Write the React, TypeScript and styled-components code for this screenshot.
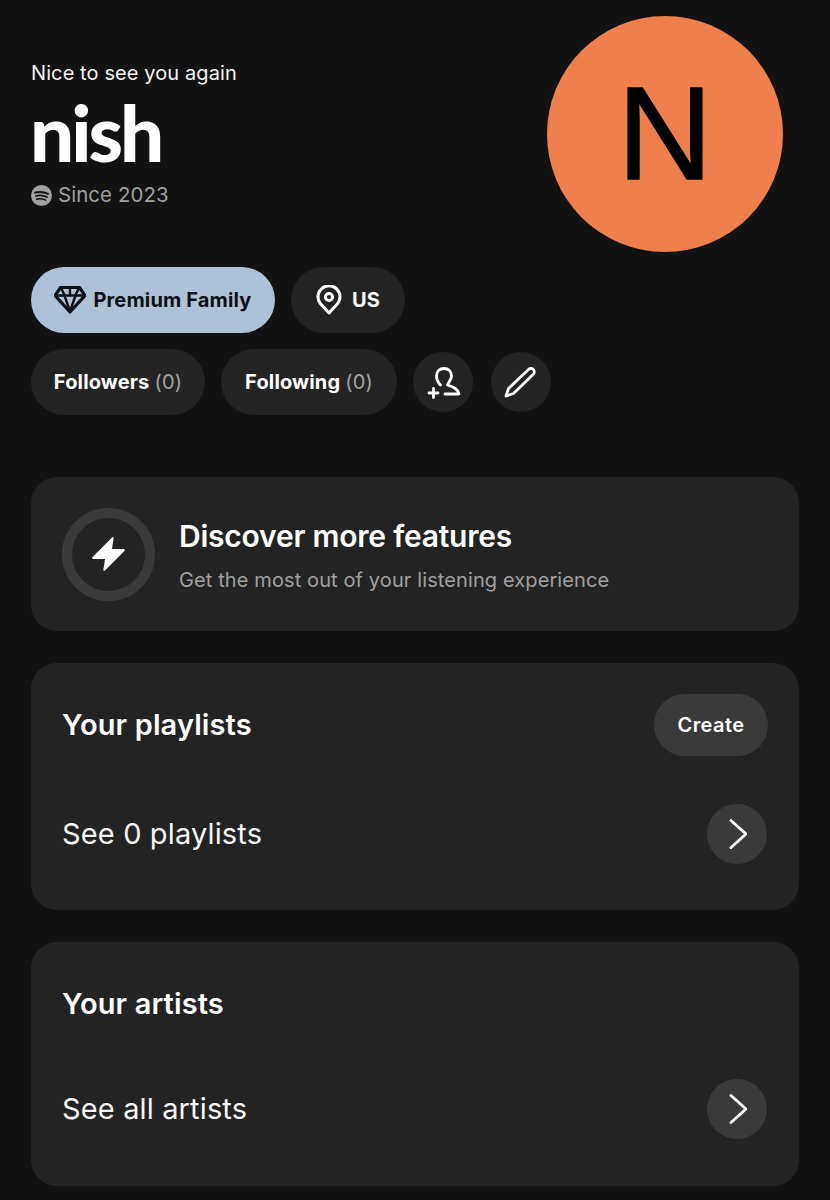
import React from 'react'
import styled, { createGlobalStyle } from 'styled-components'

const GlobalStyle = createGlobalStyle`
  html, body {
    margin: 0;
    padding: 0;
    background: #121212;
  }
  body {
    font-family: Inter, "Noto Sans", sans-serif;
    color: #fff;
  }
`

const Page = styled.div`
  width: 830px;
  height: 1200px;
  overflow: hidden;
  box-sizing: border-box;
  padding: 16px 31px 0;
  background: #121212;
`

const Header = styled.header`
  display: flex;
  justify-content: space-between;
  height: 251px;
`

const Intro = styled.div`
  display: flex;
  flex-direction: column;
  padding-top: 44px;
`

const Greeting = styled.div`
  font-size: 20px;
  line-height: 26px;
  letter-spacing: 0.1px;
  color: #f4f4f4;
`

const Name = styled.h1`
  margin: 2px 0 0 -1px;
  font-family: Lato, Inter, sans-serif;
  font-size: 78px;
  line-height: 88px;
  font-weight: 900;
  letter-spacing: -3px;
  color: #fff;
`

const Since = styled.div`
  display: flex;
  align-items: center;
  gap: 6px;
  margin-top: 5px;
  font-size: 20.4px;
  line-height: 28px;
  color: #a0a0a0;
  letter-spacing: 0.1px;
`

const Avatar = styled.div`
  width: 236px;
  height: 236px;
  margin-right: 16px;
  border-radius: 50%;
  background: #ef7f4d;
  color: #000;
  display: flex;
  align-items: center;
  justify-content: center;
  font-family: "Liberation Sans", Arial, sans-serif;
  font-size: 132px;
  line-height: 1;
  -webkit-text-stroke: 1.4px #000;
`

const PillRows = styled.div`
  display: flex;
  flex-direction: column;
  gap: 16px;
`

const PillRow = styled.div`
  display: flex;
  align-items: center;
  gap: 16px;
`

const Pill = styled.div<{ $accent?: boolean; $w: number; $gap?: number }>`
  width: ${p => p.$w}px;
  height: 66px;
  border-radius: 33px;
  display: flex;
  align-items: center;
  justify-content: center;
  gap: ${p => p.$gap ?? 7}px;
  font-size: 20px;
  font-weight: 700;
  letter-spacing: 0.15px;
  background: ${p => (p.$accent ? '#aec1d6' : '#232323')};
  color: ${p => (p.$accent ? '#0c0f14' : '#fff')};
`

const Count = styled.span`
  font-weight: 400;
  color: #a3a3a3;
  margin-left: 5px;
`

const RoundButton = styled.div<{ $bg?: string }>`
  width: 60px;
  height: 60px;
  flex: none;
  border-radius: 50%;
  background: ${p => p.$bg ?? '#232323'};
  display: flex;
  align-items: center;
  justify-content: center;
`

const EditButton = styled(RoundButton)`
  margin-left: 2px;
`

const Cards = styled.div`
  display: flex;
  flex-direction: column;
  gap: 32px;
  margin-top: 62px;
`

const Card = styled.section<{ $h: number }>`
  height: ${p => p.$h}px;
  box-sizing: border-box;
  background: #232323;
  border-radius: 26px;
  padding: 0 31px;
  display: flex;
  flex-direction: column;
`

const FeatureCard = styled(Card)`
  flex-direction: row;
  align-items: center;
  gap: 24px;
`

const Ring = styled.div`
  width: 93px;
  height: 93px;
  box-sizing: border-box;
  border: 10px solid #3a3a3a;
  border-radius: 50%;
  display: flex;
  align-items: center;
  justify-content: center;
`

const FeatureText = styled.div`
  display: flex;
  flex-direction: column;
  gap: 13px;
  padding-top: 2px;
`

const FeatureTitle = styled.div`
  font-size: 30px;
  line-height: 36px;
  font-weight: 600;
  letter-spacing: -0.22px;
`

const FeatureSub = styled.div`
  font-size: 20px;
  line-height: 26px;
  color: #a0a0a0;
  letter-spacing: 0.11px;
`

const CardHead = styled.div`
  height: 62px;
  margin-top: 31px;
  display: flex;
  align-items: center;
  justify-content: space-between;
`

const CardTitle = styled.h2`
  margin: 0;
  font-size: 29px;
  line-height: 36px;
  font-weight: 600;
  letter-spacing: 0.12px;
`

const CreateButton = styled.div`
  width: 114px;
  height: 62px;
  border-radius: 31px;
  background: #3a3a3a;
  display: flex;
  align-items: center;
  justify-content: center;
  font-size: 20px;
  font-weight: 600;
  letter-spacing: 0.4px;
`

const LinkRow = styled.div<{ $top: number }>`
  display: flex;
  align-items: center;
  justify-content: space-between;
  margin-top: ${p => p.$top}px;
  padding-right: 1px;
`

const LinkText = styled.div`
  font-size: 29px;
  line-height: 36px;
  letter-spacing: 0.14px;
  color: #f6f6f6;
`

const SpotifyIcon = () => (
  <svg width="21" height="21" viewBox="0 0 21 21">
    <circle cx="10.5" cy="10.5" r="10.5" fill="#a0a0a0" />
    <g fill="none" stroke="#121212" strokeLinecap="round">
      <path d="M4 7.600c4.300-1.200 9-.8 13 1.200" strokeWidth="2" />
      <path d="M4.800 11c3.800-1 7.800-.6 11.200 1.100" strokeWidth="1.700" />
      <path d="M5.400 14.200c3.200-.8 6.500-.5 9.400 1" strokeWidth="1.400" />
    </g>
  </svg>
)

const DiamondIcon = () => (
  <svg width="32" height="28" viewBox="4 5 32 28" fill="none" stroke="#0c0f14" strokeLinejoin="round">
    <path d="M10.500 6.500h19L35 14.500 20 31 5 14.500z" strokeWidth="3.200" />
    <path d="M5 14.500h30M14.500 14.500l5.500 16 5.500-16M11 7l3.500 7M29 7l-3.500 7M20 7v7" strokeWidth="2.400" />
  </svg>
)

const PinIcon = () => (
  <svg width="26" height="30" viewBox="0 0 26 30" fill="none" stroke="#fff" strokeWidth="3">
    <path d="M13 28 4.500 18.800A11 11 0 1 1 21.500 18.800z" strokeLinejoin="round" />
    <circle cx="13" cy="12" r="3.600" />
  </svg>
)

const AddFriendIcon = () => (
  <svg width="40" height="40" viewBox="-1 0 40 40" fill="none" stroke="#fff" strokeWidth="2.800" strokeLinecap="round" strokeLinejoin="round">
    <path d="M16.500 23C14 20.500 12.500 17.500 12.500 14C12.500 9.500 15.500 6.500 20 6.500C24.500 6.500 27.500 9.500 27.500 14C27.500 18 24.500 20 23.500 23C30 25 34 27 35 32H21" />
    <path d="M5 31h9M9.500 26.500v9" />
  </svg>
)

const PencilIcon = () => (
  <svg width="40" height="40" viewBox="1 0 40 40" fill="none" stroke="#fff" strokeWidth="2.800" strokeLinejoin="round">
    <path d="M6 34l2.500-7.500L28.500 7.500a3.400 3.400 0 0 1 4.800 0 3.400 3.400 0 0 1 0 4.800L13.500 31.500z" />
  </svg>
)

const BoltIcon = () => (
  <svg width="33" height="36" viewBox="0 0 33 36">
    <path d="M20 1.500c.8-.8 1.700-.3 1.600.8L20 13h11.500c1.200 0 1.700 1.100.9 2L13 34.500c-.8.800-1.700.300-1.600-.8L13 23H1.500C.3 23-.2 21.900.6 21z" fill="#fff" />
  </svg>
)

const ChevronIcon = () => (
  <svg width="20" height="32" viewBox="-2 0 20 32" fill="none" stroke="#fff" strokeWidth="2.800" strokeLinecap="round" strokeLinejoin="round">
    <path d="M2 2.500l15 13.500L2 29.500" />
  </svg>
)

export default function App () {
  return (
    <Page>
      <GlobalStyle />
      <Header>
        <Intro>
          <Greeting>Nice to see you again</Greeting>
          <Name>nish</Name>
          <Since><SpotifyIcon />Since 2023</Since>
        </Intro>
        <Avatar>N</Avatar>
      </Header>
      <PillRows>
        <PillRow>
          <Pill $accent $w={244}><DiamondIcon />Premium Family</Pill>
          <Pill $w={114} $gap={10}><PinIcon />US</Pill>
        </PillRow>
        <PillRow>
          <Pill $w={174}><span>Followers<Count>(0)</Count></span></Pill>
          <Pill $w={176}><span>Following<Count>(0)</Count></span></Pill>
          <RoundButton><AddFriendIcon /></RoundButton>
          <EditButton><PencilIcon /></EditButton>
        </PillRow>
      </PillRows>
      <Cards>
        <FeatureCard $h={154}>
          <Ring><BoltIcon /></Ring>
          <FeatureText>
            <FeatureTitle>Discover more features</FeatureTitle>
            <FeatureSub>Get the most out of your listening experience</FeatureSub>
          </FeatureText>
        </FeatureCard>
        <Card $h={247}>
          <CardHead>
            <CardTitle>Your playlists</CardTitle>
            <CreateButton>Create</CreateButton>
          </CardHead>
          <LinkRow $top={48}>
            <LinkText>See 0 playlists</LinkText>
            <RoundButton $bg="#3a3a3a"><ChevronIcon /></RoundButton>
          </LinkRow>
        </Card>
        <Card $h={244}>
          <CardHead>
            <CardTitle>Your artists</CardTitle>
          </CardHead>
          <LinkRow $top={44}>
            <LinkText>See all artists</LinkText>
            <RoundButton $bg="#3a3a3a"><ChevronIcon /></RoundButton>
          </LinkRow>
        </Card>
      </Cards>
    </Page>
  )
}
